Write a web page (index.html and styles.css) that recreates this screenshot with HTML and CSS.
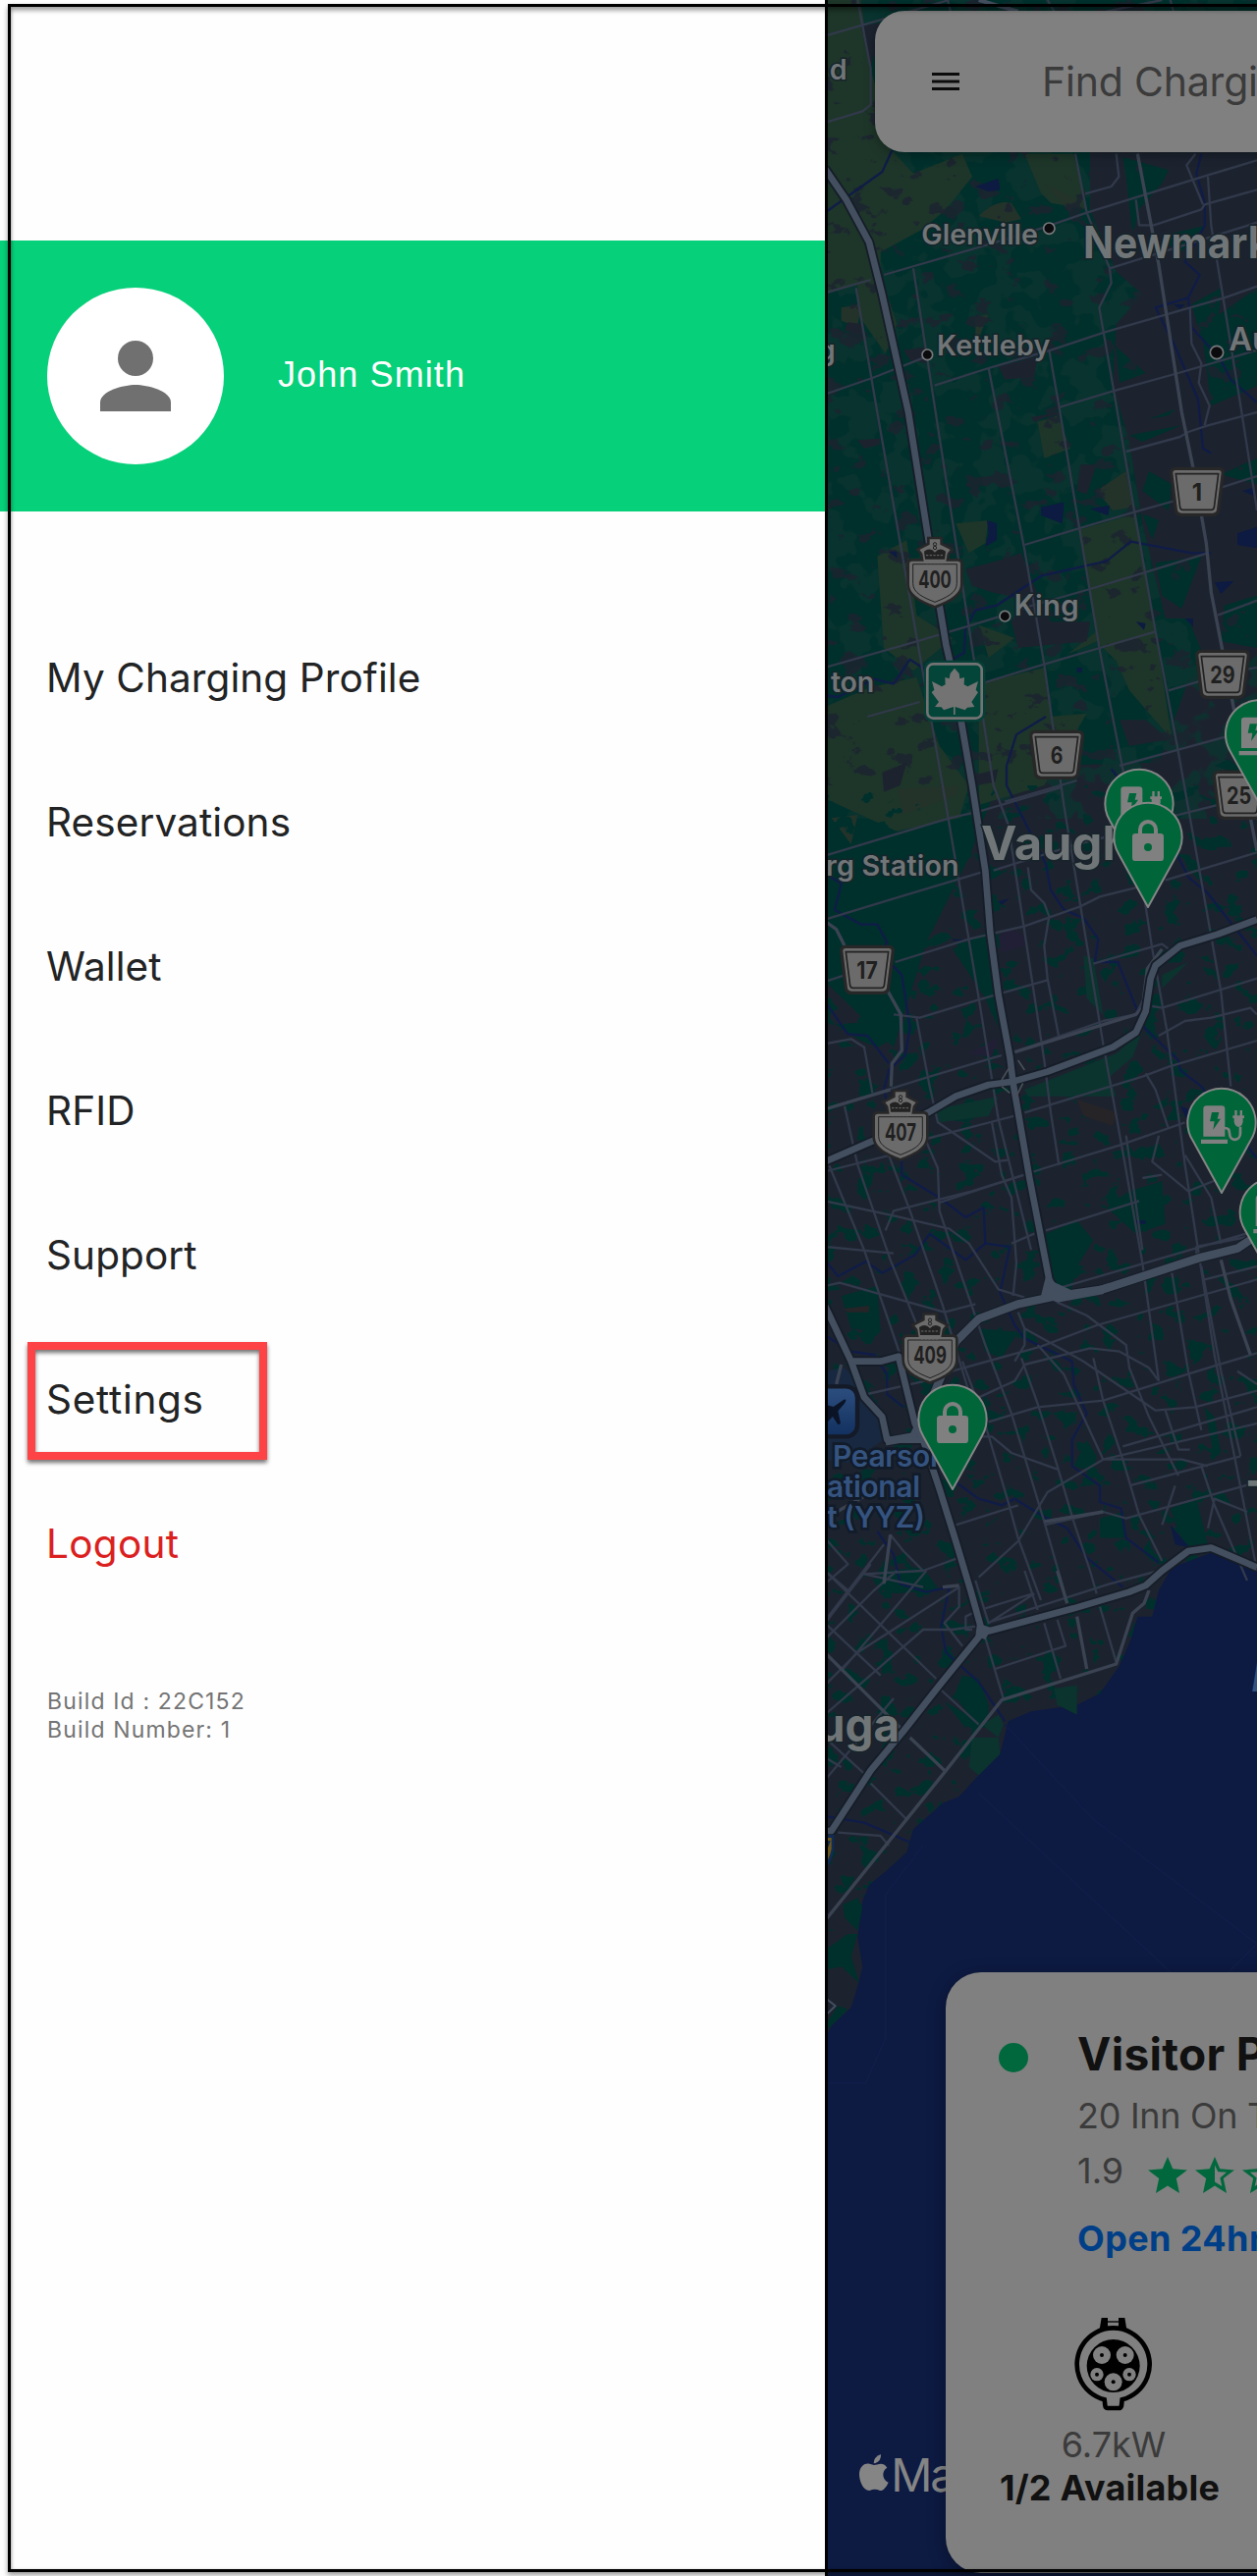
FILE: index.html
```html
<!DOCTYPE html>
<html lang="en">
<head>
<meta charset="utf-8">
<title>Menu</title>
<link rel="stylesheet" href="styles.css">
</head>
<body>
<div class="screen">
  <aside class="drawer">
    <header class="profile">
      <div class="avatar">
        <svg width="72" height="72" viewBox="0 0 72 72"><circle cx="36" cy="18" r="18"/><path d="M0 72V63C0 51 24 45 36 45S72 51 72 63V72Z"/></svg>
      </div>
      <div class="name">John Smith</div>
    </header>
    <nav class="menu">
      <a>My Charging Profile</a>
      <a>Reservations</a>
      <a>Wallet</a>
      <a>RFID</a>
      <a>Support</a>
      <a class="marked">Settings</a>
      <a class="logout">Logout</a>
    </nav>
    <div class="build">Build Id : 22C152<br>Build Number: 1</div>
  </aside>

  <main class="map">
    <svg class="canvas" width="440" height="2624" viewBox="30 0 1320 7872">
      <defs>
        <filter id="blots" x="0" y="0" width="100%" height="100%" color-interpolation-filters="sRGB">
          <feTurbulence type="fractalNoise" baseFrequency="0.016 0.02" numOctaves="4" seed="8"/>
          <feColorMatrix values="0 0 0 0 0  0 0 0 0 .188  0 0 0 0 .173  22 0 0 0 -13.4"/>
        </filter>
        <filter id="fields" x="0" y="0" width="100%" height="100%" color-interpolation-filters="sRGB">
          <feTurbulence type="fractalNoise" baseFrequency="0.013 0.018" numOctaves="4" seed="21"/>
          <feColorMatrix values="0 0 0 0 .11  0 0 0 0 .14  0 0 0 0 .19  22 0 0 0 -13.8"/>
        </filter>
        <filter id="meadow" x="0" y="0" width="100%" height="100%" color-interpolation-filters="sRGB">
          <feTurbulence type="fractalNoise" baseFrequency="0.01 0.01" numOctaves="3" seed="4"/>
          <feColorMatrix values="0 0 0 0 .043  0 0 0 0 .205  0 0 0 0 .184  0 22 0 0 -11"/>
        </filter>
        <linearGradient id="air" x2="0" y2="1"><stop stop-color="#2d4f80"/><stop offset="1" stop-color="#12305f"/></linearGradient>
        <g id="plate">
          <path d="M-74-58q0-8 8-8H66q8 0 8 8L60 55q-2 10-12 10H-48q-10 0-12-10Z" fill="#6b6b6b" stroke="#272727" stroke-width="20"/>
          <path d="M-74-58q0-8 8-8H66q8 0 8 8L60 55q-2 10-12 10H-48q-10 0-12-10Z" fill="#6b6b6b"/>
          <path d="M-65-55H65L52 48q-2 7-8 7H-44q-6 0-8-7Z" fill="none" stroke="#222" stroke-width="5"/>
        </g>
        <g id="crest">
          <path d="M-78-52q0-8 8-8H-34L-38-84-47-95-16-111V-127H16V-111L47-95 38-84 34-60H70q8 0 8 8V10C78 45 35 62 0 76-35 62-78 45-78 10Z" fill="#6b6b6b" stroke="#272727" stroke-width="16" paint-order="stroke"/>
          <path d="M-67-51H67V8C67 38 32 52 0 65-32 52-67 38-67 8Z" fill="none" stroke="#222" stroke-width="3"/>
          <path d="M-33-90Q-14-104 0-87 14-104 33-90L30-66H-30Z" fill="#222"/>
          <path d="M-27-78H27M-27-62H27M-27-54H27" stroke="#6b6b6b" stroke-width="3" stroke-dasharray="7 4"/>
          <circle cy="-112" r="5" fill="none" stroke="#222" stroke-width="3"/><circle cy="-101" r="5" fill="none" stroke="#222" stroke-width="3"/>
        </g>
        <path id="drop" d="M0-3-89-164A104 104 0 1 1 89-164Z" fill="#00663a" stroke="#858585" stroke-width="6" stroke-linejoin="round"/>
        <g id="lock">
          <use href="#drop"/>
          <rect x="-48" y="-228" width="96" height="84" rx="10" fill="#808080"/>
          <path d="M-24-225V-240a24 24 0 0 1 48 0V-225" fill="none" stroke="#808080" stroke-width="12"/>
          <circle cy="-186" r="12" fill="#00663a"/>
        </g>
        <g id="charger">
          <use href="#drop"/>
          <path d="M-56-175V-259q0-10 10-10H0q10 0 10 10V-175ZM-63-166H18V-153H-63Z" fill="#808080"/>
          <path d="M-30-249H-8L-13-229H-3L-26-196-22-221H-36Z" fill="#00663a"/>
          <path d="M8-201c14 0 15 6 16 16 1 26 33 26 33 0V-205" fill="none" stroke="#808080" stroke-width="8"/>
          <path d="M34-239H69V-231H65V-220Q62-206 52-204 41-206 38-220V-231H34ZM40-255h7v16h-7ZM56-255h7v16h-7Z" fill="#808080"/>
        </g>
      </defs>

      <rect x="30" width="1320" height="7872" fill="#1c232f"/>
      <!-- countryside in the north -->
      <path d="M30 0H1350V1950L1140 2080 1050 2330 700 2340 540 2440 470 2620 340 2880 240 3200 30 3000Z" fill="#00302c"/>
      <rect x="30" width="1320" height="2500" filter="url(#meadow)" opacity=".8"/>
      <g fill="#1e3629">
        <path d="M30 0H140L170 210 235 460 300 530 450 470 480 540 400 640 330 700 200 770 200 840 250 990 215 1080 130 960 130 870 30 900Z"/>
        <path d="M640 470H790L830 640 720 620 690 590Z"/>
        <path d="M805 1620L980 1570 1040 1930 1090 2260 960 2110 920 2020 860 1960 770 2000 860 1930Z"/>
        <path d="M30 2160L170 2100 310 2070 380 2280 470 2400 440 2500 250 2540 30 2440ZM500 2090L700 2040 720 2190 830 2180 700 2400 500 2460Z"/>
        <path d="M190 1700L280 1650 310 1880 420 1950 300 2050 210 1980Z"/>
        <path d="M430 1600L530 1590 520 1660 470 1690ZM500 1910L610 1950 530 2010ZM680 1290L740 1270 780 1370 700 1400Z"/>
      </g>
      <g fill="#23332a">
        <path d="M500 660Q550 610 600 620L630 670 580 680 540 670ZM700 560L800 610 780 650ZM80 940L140 930 130 1000 80 980ZM860 1500L950 1440 970 1550 910 1560ZM490 970L530 960 490 1060Z"/>
        <path d="M250 2410L440 2400 430 2430 270 2490ZM50 2500L130 2490 110 2580Z"/>
      </g>
      <g fill="#1c232f">
        <path d="M840 465H1350V2000L1230 2110 1140 1890 1070 1890 1000 1600 960 1350 910 1180 920 990 1000 900 920 830 890 760 840 640Z"/>
        <path d="M140 80L200 70 170 210ZM560 1120L680 1090 670 1150 580 1160ZM100 985L145 990 140 1020 90 1010ZM270 1070L340 1060 340 1110 290 1100Z"/>
        <path d="M130 1345L200 1340 195 1360 150 1370ZM660 1275L740 1260 670 1290ZM810 1420L860 1420 830 1510 800 1500Z"/>
        <path d="M460 1740L570 1710 630 1690 660 1770 720 1900 840 1900 830 1960 620 1980 600 1900 640 1830 540 1810 480 1790Z"/>
        <path d="M930 2200L1010 2200 1080 2260 960 2280ZM205 2360L280 2330 260 2400 210 2420ZM480 2370L560 2350 550 2390 490 2400Z"/>
      </g>
      <path d="M940 480L1080 520 1060 560 990 640 970 720 950 540ZM1060 720L1190 690 1110 780ZM1150 930L1240 880 1220 1150 1170 1000ZM920 1060L1010 1140 930 1170ZM1020 1280L1100 1250 1080 1270ZM1000 1570L1050 1590 1030 1650ZM1250 1850L1350 1820V1980L1240 1960ZM1220 2340L1350 2280V2380ZM1240 1450L1350 1400V1480ZM1180 1000L1350 880V1180L1210 1240ZM960 1330L1120 1300 1000 1350ZM1020 1440L1090 1480 1080 1560 1000 1500ZM1040 1720L1180 1700 1120 1860 1060 1820Z" fill="#00302c"/>
      <rect x="30" width="1320" height="2400" filter="url(#fields)" opacity=".85"/>
      <rect x="30" y="2400" width="1320" height="3500" filter="url(#blots)"/>
      <g fill="#00302c">
        <path d="M705 3770L800 3730 850 3790 800 3870 780 3950 710 3910ZM890 3690L960 3640 1060 3610 1070 3740 980 3770ZM1085 4610L1165 4580 1200 4720 1130 4730Z"/>
        <path d="M425 5180L450 5120 500 5130 530 5210 530 5280 500 5280ZM395 5200L500 5260 460 5280ZM1190 4300L1220 4330 1240 4440 1215 4430ZM500 4060L620 4070 570 4150 520 4130ZM830 4400L860 4450 850 4500 790 4480Z"/>
        <path d="M30 2670L170 2650 220 2880 130 2820ZM60 3130L240 3120 250 3170 190 3200 140 3180ZM420 2900L520 2850 540 2960 560 3140 520 3050Z"/>
        <path d="M80 3960L190 3930 200 4070 110 4060ZM870 4640L940 4620 950 4700 870 4700ZM210 4800L330 4790 380 4860 240 4870Z"/>
      </g>
      <path d="M640 3330L920 3220 1000 3150 970 3230 900 3290 920 3350 650 3350ZM370 3390L560 3350 530 3410 380 3430ZM820 2920L850 2930 880 3100 830 3050ZM1060 2980L1140 2940 1060 3020Z" fill="#0b342f"/>
      <g fill="#0d1a42">
        <path d="M490 570L560 545 565 580 530 585ZM690 1550L760 1535 755 1600 690 1575ZM525 1590L555 1600 555 1650 520 1670 530 1630ZM840 1555L900 1545 895 1575ZM225 1685H250V1705ZM1290 1630L1350 1610V1675L1290 1665ZM1220 1780L1280 1775 1240 1815ZM1130 1890H1155V1915ZM980 1900L1010 1905 1005 1925ZM800 2040H815V2055H800ZM1095 930H1130L1115 945ZM1305 1500L1340 1490V1515ZM560 2755L595 2745 570 2765ZM420 2870H450V2875H420ZM1115 3380L1145 3390 1140 3430ZM1085 4660L1145 4730 1100 4720ZM980 3730H1010V3740H980Z"/>
      </g>
      <path d="M560 2860L600 2840 640 2860 640 2890 570 2910ZM470 3220L560 3170 540 3230Z" fill="#211f36"/>
      <path d="M800 3360L920 3400 910 3440 820 3410ZM85 4000L165 3990V4010H100Z" fill="#262427"/>

      <!-- lake -->
      <path d="M1050 4860L1090 4790 1210 4745 1350 4800V7872H30V6230L50 6190 110 6135 130 6070 145 6010 130 5920 145 5810 165 5760 220 5715 280 5660 300 5590 390 5510 440 5490 500 5425 565 5360 590 5260 660 5230 800 5210 870 5175 930 5090 965 5010 985 4940 1030 4940Z" fill="#0d1a42"/>
      <path d="M480 5310H560L565 5360 500 5425 470 5400ZM510 5270L560 5240 575 5270 560 5310ZM730 5160L800 5150 800 5240 740 5210Z" fill="#0b342f"/>
      <path d="M85 5820L130 5800 145 5830 130 5900 90 5860ZM30 5960L100 5910 130 5910 110 5980 135 6060 80 6010 30 6020ZM30 6190L70 6130 100 6140 40 6200Z" fill="#00302c"/>
      <path d="M30 4190L90 4180 200 4300 210 4400 100 4470 30 4460Z" fill="#172840"/>
      <g fill="none" stroke="#101e47" stroke-width="6">
        <path d="M580 5270L850 5560 1350 5940M500 5480L1100 6040M330 5640L215 5790V6230L155 6365H30M1250 6040L1350 5940"/>
      </g>

      <!-- rivers -->
      <g fill="none" stroke="#101c48" stroke-width="7" stroke-linejoin="round">
        <path d="M30 650L205 525 235 460M1180 470L1165 530 1190 620 1190 690 1130 800 1175 840 1140 910 1040 940 1100 1060 1170 1220 1185 1370 1210 1385M1140 910L1150 1000 1240 1100 1270 1160 1350 1230"/>
        <path d="M30 2125L70 2130 180 2075 240 2090 290 2015 350 2055 455 1995 460 1920 490 1865 555 1850 690 1760 890 1715 965 1655 1150 1690 1210 1690M705 2190L615 2245 585 2340 585 2400 650 2530 705 2640 720 2720 760 2780 820 2805 865 2870 855 2940 925 2940 1005 3140 1110 3240 1115 3270 1180 3320 1350 3540"/>
        <path d="M905 2350L1100 2600 1140 2680 1200 2730 1270 2820 1350 2920M30 2670L80 2700 60 2780 140 2825 190 2825 220 2880 200 2910 265 2980 290 3140 275 3225 225 3270 210 3330 265 3540 265 3590 380 3660 460 3720 515 3690 520 3800 595 3810 565 3950 610 4050 640 4090 785 4160 790 4230 830 4320 785 4400 785 4480 870 4540 870 4590 935 4610 950 4700 1050 4775"/>
        <path d="M30 3060L100 3160 160 3165 225 3250M30 3850L70 3900 155 3855 205 3890 305 3835 350 3770 460 3850 520 3800M30 4080L110 4130 180 4140 220 4200 220 4260 270 4300M390 4500L500 4580 570 4600 610 4580 690 4630 770 4670 830 4760 940 4850M190 4680L240 4750 260 4840 340 4865 410 4850 385 4970 400 5050 500 5140 580 5260M30 5550L150 5570 290 5630"/>
      </g>

      <!-- concession roads -->
      <g fill="none" stroke="#31394a" stroke-width="7" stroke-linejoin="round">
        <path d="M130 0L170 210 170 320 145 340 30 375M30 110L410 0M405 0L415 40M710 0L730 35M890 35L1060 0M1085 0L1095 35"/>
        <path d="M300 820L545 2400 590 2520 700 3240 720 3400 745 3560M125 880L190 1260 360 2230 400 2460 500 3050 560 3420 600 3580 660 3820M530 1125L640 1680 700 2030 760 2460 880 3190 940 3520 1000 3860 1050 4220M715 1070L745 1240 870 1990 940 2350 990 2640 1030 2900 1075 3150 1130 3560 1220 4140 1350 4800"/>
        <path d="M980 610L990 688H1035L1180 640 1190 625 1350 580M920 470L928 540 905 570 825 592M1162 470L1135 505 1185 625M1200 540L1210 690 1245 900 1300 1240 1350 1560M795 470L830 650 900 820 905 865 868 940 910 1180 975 1560 1040 1930 1110 2300 1160 2580 1240 3030 1270 3320M1145 940L1150 1050 1180 1110 1172 1170 1205 1240 1190 1300"/>
        <path d="M30 1205L175 1155 340 1090M365 1178L530 1125 720 1070 885 1015 1250 910 1350 875M745 1245L910 1195 1110 1140 1350 1070M210 840L520 750 700 695 830 650 1200 535 1350 490M30 895L170 855M900 820L1350 680M950 1380L1115 1335 1140 1320 1200 1300 1350 1260M640 1665L805 1615 975 1565 1100 1530M1240 1490L1350 1455"/>
        <path d="M30 2040L310 1960 480 1910 560 1885M630 1860L840 1800 1005 1750 1200 1690M520 2085L700 2030 870 1980 1040 1930M1080 2110L1180 2080M1230 1880L1350 1835M1320 2045L1350 2040M160 2190L320 2145M930 2340L1260 2250M580 2450L800 2385"/>
        <path d="M30 2615L410 2500 500 2480 755 2405M30 2810L260 2740 510 2665M545 2660L800 2580 900 2555M1030 2510L1350 2430M245 2940L470 2870 640 2830 810 2770 870 2740 990 2710M1070 2690L1350 2605M30 3000L90 2980M240 3100L320 3110 500 3055 710 2995M850 2945L1060 2885 1080 2900M1030 3075L1060 3080 1350 2990M650 2650L660 2720 700 2760 715 2800 700 2890 710 2990 745 3170"/>
        <path d="M30 3390L350 3290 570 3225M610 3215L880 3120 980 3100 1000 3060M640 3400L1000 3290 1080 3260 1350 3180M340 3480L610 3410M30 3580L230 3530M380 3675L700 3570 930 3500 1130 3430M1050 3165L1130 3120 1210 3110 1330 3080 1350 3100M1010 3280L1040 3330 1080 3450M30 3810L240 3830"/>
        <path d="M310 3110L350 3320 375 3430 550 3550 590 3545M30 3190L110 3175 150 3200 175 3340M90 3380L130 3560 230 3850 340 4120M30 3530L150 3820 260 4140M225 3530L290 3700 390 3990 490 4320M340 3490L375 3570 380 3700 420 3820 520 4110 600 4320 700 4650 760 4860M540 3430L570 3590 600 3660 615 3860 605 3960"/>
        <path d="M30 3670L240 3715 410 3755 470 3800 560 3940 640 3965M30 3930L75 3920 395 4010 490 3985M215 3760L240 3700 480 3640 640 3590M600 3800L670 3770M705 3760L990 3670M750 3935L1350 3760M1165 3850V3810L1320 3780"/>
        <path d="M400 4195L690 4115 860 4050 1350 3910M530 4345L680 4300 880 4280 1200 4180 1350 4135M500 4270L610 4220 640 4170 840 4120 930 4130 1020 4180 1050 4220M160 4260L380 4210M620 4010L640 4060 820 4160 1040 4310 1160 4300 1350 4250M740 3980L830 4020 950 4110 960 4180 1020 4330 1110 4510M640 4060L640 4110 610 4160"/>
        <path d="M490 4390H540L600 4440 740 4490M450 4160L510 4320 590 4590 620 4700 690 4890M630 4150L680 4290 740 4480 790 4650 840 4800 860 4870M680 4110L760 4200 880 4460H1120L1200 4480M850 4150L880 4280 940 4460 990 4630 1060 4770M700 4660L880 4620 950 4640 1350 4530M500 4820L620 4710 710 4560 880 4460 1350 4350M430 4660L620 4600M30 4840L100 4780 30 4700M230 4690L270 4740 330 4800 440 4760"/>
        <path d="M950 3470L1000 3820M1130 3530L1210 3660 1240 3800M1050 3470L1030 3550 1140 3640 1240 3600M1000 3600L1060 3590M1090 3890L1140 4190 1180 4370M1180 3870L1240 4190 1300 4450M1180 4480L1220 4600 1320 4830M940 4420L1350 4300M960 4540L1300 4450M1070 4310L1110 4430 1145 4430M1290 4190L1350 4230M1100 4540L1060 4660M1200 4670L1220 4580 1320 4620M1190 3910L1350 3870"/>
        <path d="M30 5150L130 5050 440 4850 440 4910 395 4960 450 5030M30 5010L180 4860 250 4800M30 5240L330 4980 420 4980 490 4970M30 4960L200 5120M100 4860L30 4800 370 5130M210 4720L40 4940M150 4810L330 4800M170 4780L30 4960M85 5100L340 4800M30 5440L240 5190M150 4810L330 4850M30 5310L150 5420M170 5450L280 5560M70 5600L200 5610 225 5640M30 5370L80 5400"/>
        <path d="M490 4830L530 4960 670 4870M520 4915L665 4870M520 5005L575 5190M550 5100L765 5030 740 4950M700 4960L750 5130M870 4910L920 5080M640 4800L680 4920M540 4955L900 4840 1050 4800M380 5160L500 5270M480 4980L460 4980 460 4940 500 4920"/>
      </g>
      <g fill="none" stroke="#3b4352" stroke-width="10" stroke-linejoin="round">
        <path d="M985 470L1050 810 1120 1260 1155 1430 1195 1660 1210 1810 1280 2170M1330 2500L1350 2600M30 5870L400 5410 570 5195 920 5085 970 4930 1005 4900 1020 4860M30 5050L150 5170 260 5280M290 5310L395 5410M800 4940L830 5100M740 4800L770 4900"/>
        <path d="M30 3390L230 3330M610 3215L980 3100 1000 3080 1015 2960 1060 2900M1240 3850L1270 3970 1330 4140M700 4650L880 4620"/>
        <path d="M155 4570L30 4640M230 4690L210 4840M80 4170L65 4230"/>
        <path d="M30 2815L65 2840 90 2890M220 3025L262 3100 265 3210 235 3250 232 3320M390 4850L440 4845"/>
      </g>

      <!-- motorways -->
      <g fill="none" stroke-linejoin="round">
        <g stroke="#151d28" stroke-width="31">
          <path d="M30 515L95 610 165 740 190 840 205 900 285 1260 345 1640 400 1970 425 2080 480 2400 520 2660 535 2850 560 3040 595 3230 605 3310 655 3600 715 3910 740 3955"/>
          <path d="M30 3550L180 3485 345 3400 430 3350 530 3315 605 3305 710 3275 910 3200 980 3155 1010 3090 1025 2990 1040 2950 1115 2890 1230 2855 1350 2810"/>
          <path d="M1350 3775L1290 3815 1170 3845 880 3940 740 3960 620 3985 500 4030 430 4100 350 4290 300 4390 215 4405"/>
          <path d="M30 3990L110 4160 150 4270 205 4330 220 4400 330 4400 380 4550 430 4710 475 4860 510 4985M110 4160H200L255 4145 305 4350 330 4400"/>
          <path d="M1350 4790L1210 4730 1140 4740 1060 4800 1010 4845 960 4865 790 4915 510 4990 380 5150 270 5290 170 5410 50 5595H30"/>
        </g>
        <g stroke="#434e5f" stroke-width="20">
          <path d="M30 515L95 610 165 740 190 840 205 900 285 1260 345 1640 400 1970 425 2080 480 2400 520 2660 535 2850 560 3040 595 3230 605 3310 655 3600 715 3910 740 3955"/>
          <path d="M30 3550L180 3485 345 3400 430 3350 530 3315 605 3305 710 3275 910 3200 980 3155 1010 3090 1025 2990 1040 2950 1115 2890 1230 2855 1350 2810"/>
          <path d="M1350 3775L1290 3815 1170 3845 880 3940 740 3960 620 3985 500 4030 430 4100 350 4290 300 4390 215 4405" stroke-width="25"/>
          <path d="M30 3990L110 4160 150 4270 205 4330 220 4400 330 4400 380 4550 430 4710 475 4860 510 4985M110 4160H200L255 4145 305 4350 330 4400"/>
          <path d="M1350 4790L1210 4730 1140 4740 1060 4800 1010 4845 960 4865 790 4915 510 4990 380 5150 270 5290 170 5410 50 5595H30"/>
        </g>
        <path d="M500 0L620 35" stroke="#434e5f" stroke-width="12"/>
        <path d="M570 3300L595 3260M640 3270L620 3240M570 3320L595 3340M615 3350L635 3310" stroke="#4a4f55" stroke-width="5"/>
        <path d="M30 6105L62 6130 30 6160" stroke="#434e5f" stroke-width="6"/>
      </g>
      <path d="M495 4960L540 4975 520 5010 490 5000ZM705 3900L735 3920 800 3950 900 3920 880 3955 740 3980 690 3960Z" fill="#434e5f"/>

      <!-- places -->
      <g class="place">
        <text x="44" y="243" textLength="48">d</text>
        <text x="325" y="746" textLength="356">Glenville</text>
        <text x="372" y="1085" textLength="346">Kettleby</text>
        <text x="8" y="1100">g</text>
        <text x="48" y="2114" textLength="133">ton</text>
        <text x="33" y="2675" textLength="407">rg Station</text>
      </g>
      <text class="place king" x="608" y="1880" textLength="198">King</text>
      <text class="place aurora" x="1264" y="1070">Au</text>
      <text class="place city" x="819" y="788" textLength="574" lengthAdjust="spacingAndGlyphs">Newmark</text>
      <text class="place city large" x="507" y="2628" textLength="462" lengthAdjust="spacingAndGlyphs">Vaugh</text>
      <text class="place city large" x="6" y="5321" textLength="252" lengthAdjust="spacingAndGlyphs">uga</text>
      <text class="place city large" x="1318" y="4630">T</text>
      <text x="1330" y="5168" fill="#35517d" font-size="140" font-style="italic">L</text>
      <g fill="#0b0b0d" stroke="#77787b" stroke-width="5">
        <circle cx="715" cy="698" r="17"/><circle cx="343" cy="1084" r="16"/><circle cx="1227" cy="1077" r="20"/><circle cx="580" cy="1883" r="16"/>
      </g>
      <rect x="-25" y="4237" width="154" height="153" rx="34" fill="url(#air)" stroke="#141a27" stroke-width="13"/>
      <path d="M88 4277Q100 4273 89 4290L70 4312 78 4350 70 4354 54 4329 36 4347 20 4330 32 4312 20 4290 56 4299Z" fill="#0b1426"/>
      <g class="airport">
        <text x="54" y="4482" textLength="352">Pearson</text>
        <text x="36" y="4575" textLength="285">ational</text>
        <text x="36" y="4668" textLength="300">t (YYZ)</text>
      </g>
      <path d="M30 5607H58V5650Q52 5690 30 5715Z" fill="#102c55"/><path d="M30 5616H50V5650Q45 5680 30 5695Z" fill="#6e571a"/><path d="M30 5625H47L40 5645Z" fill="#102c55"/>

      <!-- park -->
      <rect x="333" y="2018" width="187" height="188" rx="26" fill="#063f37"/>
      <rect x="343" y="2029" width="166" height="166" rx="18" fill="#04453a" stroke="#737373" stroke-width="8"/>
      <path d="M426 2042L440 2058 442 2074 456 2070 455 2092 466 2098 498 2082 491 2108 498 2116 478 2145 487 2160 465 2162 458 2170 428 2160V2184H423V2160L393 2170 386 2161 366 2160 378 2145 356 2116 364 2108 357 2082 387 2098 398 2092 397 2070 410 2074 413 2058Z" fill="#737373"/>

      <!-- route shields -->
      <g class="route">
        <use href="#plate" x="1167" y="1503"/><text x="1167" y="1529">1</text>
        <use href="#plate" x="1245" y="2061"/><text x="1245" y="2087" textLength="76" lengthAdjust="spacingAndGlyphs">29</text>
        <use href="#plate" x="738" y="2307"/><text x="738" y="2333" textLength="38" lengthAdjust="spacingAndGlyphs">6</text>
        <use href="#plate" x="1298" y="2430"/><text x="1295" y="2456" textLength="76" lengthAdjust="spacingAndGlyphs">25</text>
        <use href="#plate" x="159" y="2964"/><text x="159" y="2990" textLength="64" lengthAdjust="spacingAndGlyphs">17</text>
        <use href="#crest" x="366" y="1775"/><text x="366" y="1797" textLength="101" lengthAdjust="spacingAndGlyphs">400</text>
        <use href="#crest" x="261" y="3464"/><text x="261" y="3486" textLength="96" lengthAdjust="spacingAndGlyphs">407</text>
        <use href="#crest" x="351" y="4146"/><text x="351" y="4167" textLength="101" lengthAdjust="spacingAndGlyphs">409</text>
      </g>

      <!-- stations -->
      <use href="#charger" x="1358" y="2461"/>
      <use href="#charger" x="990" y="2673"/>
      <use href="#lock" x="1017" y="2775"/>
      <use href="#charger" x="1402" y="3922"/>
      <use href="#charger" x="1242" y="3648"/>
      <use href="#lock" x="420" y="4554"/>

      <g fill="#858585">
        <path d="M201 7500Q202 7520 185 7527L179 7528Q179 7508 201 7500Z"/>
        <path d="M180 7533C190 7533 207 7520 220 7541 202 7552 205 7577 224 7586 218 7600 207 7613 198 7611 187 7606 176 7607 167 7611 148 7613 134 7582 135 7558 137 7535 153 7526 166 7529Z"/>
        <text x="232" y="7614" font-size="140" textLength="345">Maps</text>
      </g>
    </svg>

    <div class="search">
      <svg width="28" height="18" viewBox="0 0 28 18"><path d="M0 0H28V3H0ZM0 7.500H28V10.500H0ZM0 15H28V18H0Z" fill="#0c0c0c"/></svg>
      <span>Find Charging</span>
    </div>

    <section class="station">
      <i class="status"></i>
      <div class="info">
        <h2>Visitor Parking</h2>
        <p class="address">20 Inn On The Park</p>
        <div class="rating"><span>1.9</span>
          <svg width="144" height="40" viewBox="0 0 144 40" fill="#00683c">
            <path d="M20 2L25.300 14.300 40 15.500 28.800 24 32 39 20 31.500 8 39 11.200 24 0 15.500 14.700 14.300Z"/>
            <path fill-rule="evenodd" d="M68 2L73.300 14.300 88 15.500 76.800 24 80 39 68 31.500 56 39 59.200 24 48 15.500 62.700 14.300ZM68 10.500V27.600L75.300 32 73.400 23.500 80 17.800 71.300 17.300Z"/>
            <path fill-rule="evenodd" d="M116 2L121.300 14.300 136 15.500 124.800 24 128 39 116 31.500 104 39 107.200 24 96 15.500 110.700 14.300ZM116 10.500L112.700 17.300 104 17.800 110.600 23.500 108.700 32 116 27.600 123.300 32 121.400 23.500 128 17.800 119.300 17.300Z"/>
          </svg>
        </div>
        <p class="hours">Open 24hrs</p>
      </div>
      <div class="plug">
        <svg width="80" height="96" viewBox="0 0 240 288">
          <path d="M82 42L88 6H96V34H141V6H149L155 42" fill="none" stroke="#000" stroke-width="12"/><path d="M94 12H145" stroke="#000" stroke-width="4"/>
          <path d="M92 250A111 111 0 1 1 146 250L144 268Q142 276 136 276H102Q95 276 94 268Z" fill="#808080" stroke="#000" stroke-width="14"/>
          <circle cx="119" cy="147" r="81"/>
          <g fill="#808080"><circle cx="84" cy="114" r="27"/><circle cx="155" cy="114" r="27"/><circle cx="69" cy="173" r="20"/><circle cx="168" cy="173" r="20"/><circle cx="119" cy="196" r="27"/></g>
          <circle cx="84" cy="114" r="6"/><circle cx="155" cy="114" r="6"/><circle cx="69" cy="173" r="6"/><circle cx="168" cy="173" r="6"/><circle cx="119" cy="196" r="6"/>
        </svg>
        <span class="power">6.7kW</span>
        <strong>1/2 Available</strong>
      </div>
    </section>
  </main>
  <div class="frame"></div>
</div>
</body>
</html>
```
FILE: styles.css
```css
*, *::after { box-sizing: border-box; margin: 0; padding: 0; }
body { width: 1280px; height: 2624px; overflow: hidden; background: #fff; font-family: Inter, "Liberation Sans", sans-serif; }
.screen { position: relative; display: grid; grid-template-columns: 840px 440px; height: 2624px; overflow: hidden; }

.drawer { padding-top: 245px; background: #fefefe; color: #222324; }
.profile { display: flex; align-items: center; gap: 55px; height: 276px; padding-left: 48px; background: #06d079; }
.avatar { display: grid; place-items: center; width: 180px; height: 180px; border-radius: 50%; background: #fff; fill: #707070; }
.name { color: #fff; font: 36px/44px "Liberation Sans", Arial, sans-serif; letter-spacing: 1.1px; padding-bottom: 2px; }
.menu { margin-top: 96px; }
.menu a { display: block; position: relative; height: 147px; padding-left: 47px; font-size: 40.5px; line-height: 147px; letter-spacing: 0.1px; }
.menu .logout { color: #db2020; letter-spacing: 0.3px; }
.menu .marked { letter-spacing: 0.7px; }
.marked::after { content: ""; position: absolute; left: 28px; top: 15px; width: 244px; height: 120px; border: 8px solid #fd4345; filter: drop-shadow(0 3px 2px rgba(0,0,0,.55)); }
.build { margin: 73px 0 0 48px; font-size: 23px; line-height: 29px; letter-spacing: 1.15px; color: #747474; }

.map { position: relative; display: flex; flex-direction: column; justify-content: space-between; padding: 11px 0 3px; border-left: 3px solid #000; overflow: hidden; background: #0d1a42; }
.canvas { position: absolute; left: -3px; top: 0; font-family: Inter, "Liberation Sans", sans-serif; }
.place text, text.place { fill: #707577; stroke: #17242a; stroke-width: 9px; paint-order: stroke; font-size: 86px; font-weight: 600; }
text.place.king { font-size: 88px; }
text.place.aurora { font-size: 98px; }
text.place.city { font-size: 134px; font-weight: 700; }
text.place.large { font-size: 142px; }
.airport { fill: #35537f; stroke: #111b29; stroke-width: 16px; paint-order: stroke; font-size: 90px; font-weight: 600; }
.route text { fill: #202020; font: 700 72px Inter, "Liberation Sans", sans-serif; text-anchor: middle; }

.search { position: relative; display: flex; align-items: center; width: 480px; height: 144px; margin-left: 48px; padding-left: 58px; gap: 84px; flex: none; border-radius: 30px; background: #808080; box-shadow: 0 3px 12px rgba(0,0,0,.3); }
.search span { font-size: 41px; letter-spacing: -0.2px; white-space: nowrap; color: #3b3b3b; }

.station { position: relative; display: grid; grid-template-columns: 30px 400px; align-content: start; column-gap: 50px; width: 600px; height: 612px; margin-left: 120px; padding: 53px 0 0 54px; border-radius: 36px; background: #808080; box-shadow: 0 4px 18px rgba(0,0,0,.35); white-space: nowrap; }
.status { width: 30px; height: 30px; margin-top: 19px; border-radius: 50%; background: #00683c; }
.station h2 { font-size: 46px; line-height: 60px; font-weight: 700; letter-spacing: .3px; color: #111; }
.station p, .rating { font-size: 36px; line-height: 44px; letter-spacing: -.3px; color: #3b3b3b; }
.station .address { margin-top: 11px; }
.rating { display: flex; gap: 24px; margin-top: 12px; height: 52px; }
.rating svg { margin-top: 6px; }
.rating span { width: 48px; letter-spacing: 0; }
.station .hours { margin-top: 17px; font-weight: 700; letter-spacing: .4px; color: #003f87; }
.plug { grid-column: 1 / 3; display: flex; flex-direction: column; align-items: center; width: 226px; margin-top: 59px; }
.plug svg { margin-left: 8px; }
.power { margin: 11px 0 0 8px; font-size: 36px; line-height: 44px; color: #3b3b3b; }
.plug strong { font-size: 36px; line-height: 44px; letter-spacing: .2px; color: #111; }

.frame { position: absolute; left: 8px; top: 4px; width: 1300px; height: 2616px; border: 3px solid #000; box-shadow: 0 3px 5px rgba(0,0,0,.4), inset 0 4px 4px rgba(0,0,0,.32), inset 1px 0 3px rgba(0,0,0,.15); }
```
